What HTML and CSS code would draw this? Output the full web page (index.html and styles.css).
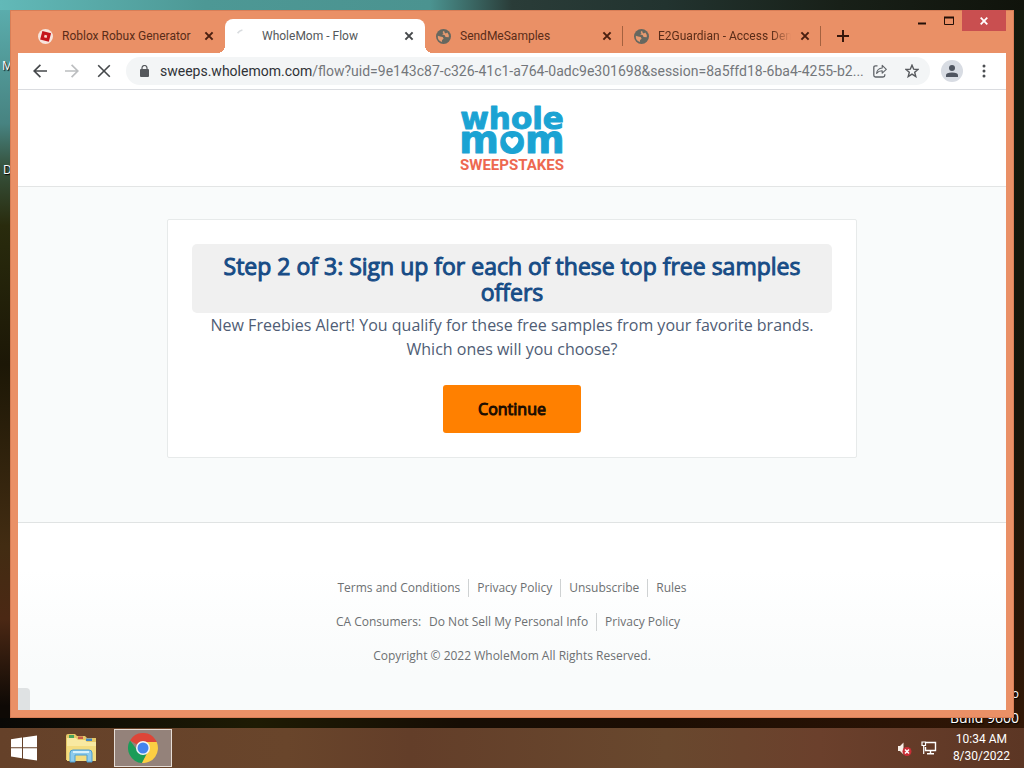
FILE: index.html
```html
<!DOCTYPE html>
<html lang="en">
<head>
<meta charset="utf-8">
<meta name="viewport" content="width=device-width, initial-scale=1">
<title>WholeMom - Flow</title>
<link rel="stylesheet" href="styles.css">
</head>
<body>
<svg class="defs" aria-hidden="true">
  <symbol id="close" viewBox="0 0 10 10"><path d="M1.4 1.4 8.6 8.6M8.6 1.4 1.4 8.6" stroke="currentColor" stroke-width="2" fill="none"/></symbol>
  <symbol id="globe" viewBox="0 0 14 14"><circle cx="7" cy="7" r="7" fill="#66675f"/><path d="M1.7 6.3 3.9 7.1 6.3 7.5 7.1 9.2 5.7 10.3 5.5 12.2A5.6 5.6 0 0 1 1.7 6.3ZM7.5 1.7 6.1 2.9 7 4.2 5.6 5 8.2 5.8 8.9 7.5 11.9 7.7A5.3 5.3 0 0 0 10.6 3.2L9.1 4.2 8.1 3.4Z" fill="#e69a70"/></symbol>
</svg>
<div class="desktop">
  <span class="desk-label label-m">M</span>
  <span class="desk-label label-d">D</span>
  <span class="desk-label label-pro">Windows 8.1 Pro</span>
  <span class="desk-label label-build">Build 9600</span>

  <div class="window">
    <div class="tabstrip">
      <div class="tab">
        <svg class="favicon" viewBox="0 0 14 14"><circle cx="7" cy="7" r="7" fill="#f7e4dc"/><path d="M4.1 1.8 12.2 3.9 10.1 12 2 9.9Z" fill="#c5161c"/><path d="M6.2 5.4 8.6 6 8 8.4 5.6 7.8Z" fill="#f7d9d0"/></svg>
        <span class="tab-title">Roblox Robux Generator</span>
        <button class="tab-close" aria-label="Close tab"><svg viewBox="0 0 10 10"><use href="#close"/></svg></button>
      </div>
      <div class="tab active">
        <svg class="favicon" viewBox="0 0 14 14"><path d="M1.5 4Q3 1.6 6 1" stroke="#d9dcdf" stroke-width="1.5" fill="none"/></svg>
        <span class="tab-title">WholeMom - Flow</span>
        <button class="tab-close" aria-label="Close tab"><svg viewBox="0 0 10 10"><use href="#close"/></svg></button>
      </div>
      <div class="tab divided">
        <svg class="favicon" viewBox="0 0 14 14"><use href="#globe"/></svg>
        <span class="tab-title">SendMeSamples</span>
        <button class="tab-close" aria-label="Close tab"><svg viewBox="0 0 10 10"><use href="#close"/></svg></button>
      </div>
      <div class="tab divided">
        <svg class="favicon" viewBox="0 0 14 14"><use href="#globe"/></svg>
        <span class="tab-title faded">E2Guardian - Access Denied</span>
        <button class="tab-close" aria-label="Close tab"><svg viewBox="0 0 10 10"><use href="#close"/></svg></button>
      </div>
      <button class="new-tab" aria-label="New tab"><svg viewBox="0 0 12 12"><path d="M6 0V12M0 6H12" stroke="#35170c" stroke-width="2"/></svg></button>
      <div class="win-controls">
        <button class="win-btn" aria-label="Minimize"><svg width="10" height="10" viewBox="0 0 10 10"><path d="M1 7.5H9" stroke="#241008" stroke-width="2"/></svg></button>
        <button class="win-btn" aria-label="Maximize"><svg width="10" height="10" viewBox="0 0 10 10"><path d="M.5 1V8.5H9.5V1" stroke="#241008" fill="none"/><path d="M0 1.5H10" stroke="#241008" stroke-width="2"/></svg></button>
        <button class="win-btn win-close" aria-label="Close"><svg width="8" height="8" viewBox="0 0 8 8"><path d="M.7.7 7.3 7.3M7.3.7.7 7.3" stroke="#fff" stroke-width="1.8"/></svg></button>
      </div>
    </div>

    <div class="toolbar">
      <button class="tool" aria-label="Back"><svg width="14" height="14" viewBox="0 0 14 14"><path d="M14 7H1.2M7.4.8 1.2 7 7.4 13.2" stroke="#45484b" stroke-width="1.7" fill="none"/></svg></button>
      <button class="tool" aria-label="Forward"><svg width="14" height="14" viewBox="0 0 14 14"><path d="M0 7H12.8M6.6.8 12.8 7 6.6 13.2" stroke="#bcbec0" stroke-width="1.7" fill="none"/></svg></button>
      <button class="tool" aria-label="Stop"><svg width="14" height="14" viewBox="0 0 14 14"><path d="M1.2 1.2 12.8 12.8M12.8 1.2 1.2 12.8" stroke="#45484b" stroke-width="1.6"/></svg></button>
      <div class="omnibox">
        <svg width="9" height="12" viewBox="0 0 9 12"><path d="M2 5V3a2.5 2.5 0 0 1 5 0v2" stroke="#55585c" stroke-width="1.2" fill="none"/><rect y="4" width="9" height="8" rx="1" fill="#55585c"/></svg>
        <div class="url"><b>sweeps.wholemom.com</b>/flow?uid=9e143c87-c326-41c1-a764-0adc9e301698&amp;session=8a5ffd18-6ba4-4255-b2...</div>
        <button class="tool small" aria-label="Share"><svg width="14" height="14" viewBox="0 0 14 14"><path d="M4.5 1.8H2.5Q.8 1.8.8 3.5V11.3Q.8 13 2.5 13H10Q11.8 13 11.8 11.3V10.2" stroke="#5f6368" stroke-width="1.3" fill="none"/><path d="M3.6 9.4Q4.2 4.3 9.2 4V1.4L13.3 5.4 9.2 9.2V6.7Q5.8 6.6 3.6 9.4Z" stroke="#5f6368" stroke-width="1.1" stroke-linejoin="round" fill="none"/></svg></button>
        <button class="tool small" aria-label="Bookmark"><svg width="14" height="14" viewBox="0 0 14 14"><path d="M7 1.2 8.7 5.2 13 5.5 9.7 8.3 10.8 12.6 7 10.2 3.2 12.6 4.3 8.3 1 5.5 5.3 5.2Z" stroke="#55585c" stroke-width="1.4" fill="none"/></svg></button>
      </div>
      <button class="profile" aria-label="Profile"><svg width="12" height="12" viewBox="0 0 12 12"><circle cx="6" cy="3" r="3" fill="#4f5560"/><path d="M0 12V10.3Q0 7.5 6 7.5T12 10.3V12Z" fill="#4f5560"/></svg></button>
      <button class="tool menu" aria-label="Menu"><svg width="4" height="14" viewBox="0 0 4 14"><g fill="#4c4f53"><circle cx="2" cy="2" r="1.5"/><circle cx="2" cy="7" r="1.5"/><circle cx="2" cy="12" r="1.5"/></g></svg></button>
    </div>

    <div class="page">
      <header class="site-header">
        <svg class="logo" width="108" height="68" viewBox="0 0 108 68" role="img" aria-label="whole mom sweepstakes">
          <text class="logo-word" x="54" y="25" font-size="31">whole</text>
          <text class="logo-word" x="54" y="49" font-size="38">mom</text>
          <ellipse cx="54" cy="38" rx="10" ry="10" fill="#1ba3d3"/>
          <path d="M54 44.5C46 39 46.6 33.5 50 32.8 52 32.5 53.5 33.8 54 35 54.5 33.8 56 32.5 58 32.8 61.4 33.5 62 39 54 44.5Z" fill="#fff"/>
          <text class="logo-sub" x="54" y="66" font-size="15">SWEEPSTAKES</text>
        </svg>
      </header>
      <main class="main">
        <section class="card">
          <h1 class="step">Step 2 of 3: Sign up for each of these top free samples offers</h1>
          <p class="intro">New Freebies Alert! You qualify for these free samples from your favorite brands. Which ones will you choose?</p>
          <button class="continue">Continue</button>
        </section>
      </main>
      <footer class="footer">
        <nav class="links">
          <a href="#terms">Terms and Conditions</a><a href="#privacy">Privacy Policy</a><a href="#unsubscribe">Unsubscribe</a><a href="#rules">Rules</a>
        </nav>
        <nav class="links consumers">
          <span>CA Consumers:</span><a href="#donotsell">Do Not Sell My Personal Info</a><a href="#ca-privacy">Privacy Policy</a>
        </nav>
        <p class="copyright">Copyright © 2022 WholeMom All Rights Reserved.</p>
      </footer>
      <div class="status"></div>
    </div>
  </div>
</div>

<div class="taskbar">
  <button class="task" aria-label="Start"><svg width="26" height="26" viewBox="0 0 26 26"><path d="M0 4.2 11 2.6V12.3H0ZM12 2.4 26 .4V12.3H12ZM0 13.3H11V23.2L0 21.6ZM12 13.3H26V25.5L12 23.4Z" fill="#fff"/></svg></button>
  <button class="task" aria-label="File Explorer"><svg width="32" height="30" viewBox="0 0 32 30"><path d="M1 27V3Q1 1 3 1H10L12 3H20L22 5H31V27Z" fill="#e5c868"/><path d="M4 2H9V5H4Z" fill="#4aa35c"/><path d="M13 3.5H18V6H13Z" fill="#c85b4a"/><path d="M21 5.5H27V8H21Z" fill="#4387c4"/><path d="M2 5H11L13 7H20L22 9H31V28H2Z" fill="#f8e9a1"/><path d="M2 13H31V28H2Z" fill="#f3dc80"/><path d="M5 29V20Q5 17 8 17H24Q27 17 27 20V29H22V22H10V29Z" fill="#8ecbed" stroke="#4d9fd1"/><path d="M8 19H24" stroke="#d8f1fb" stroke-width="2"/></svg></button>
  <button class="task current" aria-label="Google Chrome"><svg width="30" height="30" viewBox="0 0 30 30"><path d="M15 15 2 7.5A15 15 0 0 1 28 7.5L28.7 9H15Z" fill="#dd4638"/><path d="M15 15 20.2 18 14 30A15 15 0 0 1 2 7.5L9.8 18Z" fill="#1b9c58"/><path d="M15 9H28.7A15 15 0 0 1 14 30L20.2 18Z" fill="#fccf43"/><circle cx="15" cy="15" r="7" fill="#f4f5f5"/><circle cx="15" cy="15" r="5.5" fill="#4484ee"/></svg></button>
  <div class="tray">
    <svg width="15" height="15" viewBox="0 0 15 15"><path d="M1 5H3L6.5 1.5V13.5L3 10H1Z" fill="#f8f0e8"/><circle cx="10" cy="10.5" r="4.5" fill="#c92e36"/><path d="M8 8.5 12 12.5M12 8.5 8 12.5" stroke="#fff" stroke-width="1.5"/></svg>
    <svg width="16" height="14" viewBox="0 0 16 14"><path d="M5 1.5H14.5V9.5H4.5V6M9.5 10V12.5M6 12.8H13" stroke="#fff" stroke-width="1.4" fill="none"/><path d="M1 1H4.5V4.5H1ZM2.7 4.5V13" stroke="#fff" stroke-width="1.2" fill="#5b3726"/></svg>
    <div class="clock"><span>10:34 AM</span><span>8/30/2022</span></div>
  </div>
</div>
</body>
</html>
```
FILE: styles.css
```css
* { box-sizing: border-box; }

body {
  margin: 0;
  height: 100vh;
  display: flex;
  flex-direction: column;
  overflow: hidden;
  font-family: "Open Sans", "Noto Sans", sans-serif;
}

button {
  border: 0;
  padding: 0;
  background: none;
  font: inherit;
  color: inherit;
  display: flex;
  align-items: center;
  justify-content: center;
}

svg { display: block; flex: none; }
.defs { position: absolute; width: 0; height: 0; }

/* Desktop */
.desktop {
  position: relative;
  flex: 1;
  min-height: 0;
  padding: 10px;
  display: flex;
  overflow: hidden;
  background:
    linear-gradient(90deg, #62b9b8 0, #4d9895 20%, #4b9390 42%, #2a3c38 50%, #22332f 65%, #182018 82%, #10130b 100%) top / 100% 10px no-repeat,
    linear-gradient(90deg, #090806 0, #1e1b04 25%, #160d04 45%, #1c0d03 65%, #321706 100%) bottom / 100% 10px no-repeat,
    linear-gradient(#141a0d 0, #17160a 55%, #321706 100%) right / 10px 100% no-repeat,
    linear-gradient(#5cb0b0 0, #478381 17%, #36523d 23%, #292b0d 31%, #1c1706 50%, #422c12 75%, #4b2814 85%, #0e0905 97%) left / 10px 100% no-repeat;
}
.desk-label {
  position: absolute;
  font-size: 12px;
  line-height: 16px;
  color: #fff;
  text-shadow: 1px 1px 1px #000;
}
.label-m { left: 2px; top: 58px; }
.label-d { left: 3px; top: 162px; }
.label-pro { right: 5px; bottom: 26px; }
.label-build { right: 5px; bottom: 2px; font-size: 14px; }

/* Browser window */
.window {
  position: relative;
  flex: 1;
  min-width: 0;
  display: flex;
  flex-direction: column;
  padding: 0 8px 8px;
  background: #ea9066;
  box-shadow: inset 0 0 0 1px #d87e57;
}
.tabstrip {
  display: flex;
  align-items: flex-end;
  height: 43px;
  padding-left: 9px;
  font-family: Roboto, "Noto Sans", sans-serif;
  font-size: 12px;
  color: #5a2c18;
}
.tab {
  position: relative;
  flex: 0 1 198px;
  min-width: 0;
  height: 34px;
  display: flex;
  align-items: center;
  gap: 9px;
  padding: 0 11px 0 11px;
}
.tab.active {
  flex-basis: 200px;
  background: #fff;
  border-radius: 8px 8px 0 0;
  color: #54575a;
}
.tab.active .favicon { margin-right: 2px; }
.tab.active::before,
.tab.active::after {
  content: "";
  position: absolute;
  bottom: 0;
  width: 8px;
  height: 8px;
}
.tab.active::before { right: 100%; background: radial-gradient(circle at 0 0, transparent 8px, #fff 8px); }
.tab.active::after { left: 100%; background: radial-gradient(circle at 100% 0, transparent 8px, #fff 8px); }
.tab.divided::after {
  content: "";
  position: absolute;
  right: 0;
  top: 7px;
  width: 1px;
  height: 20px;
  background: #a4613f;
}
.favicon { width: 15px; height: 15px; }
.tab-title {
  flex: 1;
  min-width: 0;
  overflow: hidden;
  white-space: nowrap;
}
.tab-title.faded {
  -webkit-mask-image: linear-gradient(90deg, #000 85%, transparent);
  mask-image: linear-gradient(90deg, #000 85%, transparent);
}
.tab-close { width: 10px; height: 10px; color: #4a1f10; }
.tab-close svg { width: 10px; height: 10px; }
.active .tab-close { color: #45484b; }
.new-tab { width: 44px; height: 34px; }
.new-tab svg { width: 12px; height: 12px; }
.win-controls { display: flex; align-self: flex-start; margin-left: auto; }
.win-btn { width: 27px; height: 21px; }
.win-close { width: 44px; background: #c94f50; }

.toolbar {
  display: flex;
  align-items: center;
  height: 37px;
  padding: 0 8px;
  background: #fff;
  border-bottom: 1px solid #dadce0;
}
.tool { width: 28px; height: 28px; margin-right: 4px; }
.tool.small { margin: 0 2px; }
.tool.menu { margin: 0; }
.omnibox {
  flex: 1;
  min-width: 0;
  height: 28px;
  display: flex;
  align-items: center;
  margin: 0 11px 0 4px;
  padding: 0 2px 0 14px;
  background: #f3f5f6;
  border-radius: 14px;
}
.url {
  flex: 1;
  min-width: 0;
  margin-left: 11px;
  overflow: hidden;
  white-space: nowrap;
  font-family: Roboto, "Noto Sans", sans-serif;
  font-size: 14px;
  color: #73777b;
}
.url b { font-weight: 400; color: #303236; }
.profile {
  width: 22px;
  height: 22px;
  margin-right: 7px;
  border-radius: 50%;
  background: #d8dce3;
}

/* Web page */
.page {
  position: relative;
  flex: 1;
  min-height: 0;
  display: flex;
  flex-direction: column;
  background: #fff;
}
.site-header {
  display: flex;
  justify-content: center;
  padding: 14px 0;
  border-bottom: 1px solid #e3e5e5;
}
.logo { overflow: visible; }
.logo-word {
  font-family: "DejaVu Sans", sans-serif;
  font-weight: 700;
  text-anchor: middle;
  fill: #1ba3d3;
  stroke: #1ba3d3;
  stroke-width: 1px;
  stroke-linejoin: round;
}
.logo-sub {
  font-family: Roboto, "Liberation Sans", sans-serif;
  font-weight: 700;
  text-anchor: middle;
  fill: #ed6850;
}
.main {
  padding: 32px 16px 64px;
  background: #f9fbfb;
  border-bottom: 1px solid #e0e3e3;
}
.card {
  max-width: 690px;
  margin: 0 auto;
  padding: 24px;
  display: flex;
  flex-direction: column;
  align-items: center;
  text-align: center;
  background: #fff;
  border: 1px solid #e7eaea;
  border-radius: 2px;
}
.step {
  align-self: stretch;
  margin: 0;
  padding: 9px 8px 8px;
  border-radius: 5px;
  background: #f0f0f0;
  color: #174c86;
  font-size: 23px;
  line-height: 26px;
  font-weight: 400;
  -webkit-text-stroke: 1px #174c86;
}
.intro {
  margin: 0 0 24px;
  font-size: 16px;
  line-height: 24px;
  color: #4f5d75;
}
.continue {
  height: 48px;
  padding: 0 35px;
  border-radius: 3px;
  background: #ff8000;
  color: #1c0d00;
  font-size: 16px;
  -webkit-text-stroke: 1px #1c0d00;
}
.footer {
  flex: 1;
  display: flex;
  flex-direction: column;
  align-items: center;
  gap: 16px;
  padding-top: 56px;
  font-size: 12px;
  line-height: 18px;
  color: #6d7072;
  background: linear-gradient(#fff 25%, #f9fbfb 80%);
}
.links { display: flex; }
.links > * { padding: 0 8px; color: inherit; text-decoration: none; }
.links a + a { border-left: 1px solid #cfd2d3; }
.links span { padding-right: 0; }
.consumers { padding-right: 8px; }
.copyright { margin: 0; }
.status {
  position: absolute;
  left: 0;
  bottom: 0;
  width: 12px;
  height: 22px;
  background: #dfe2e3;
  border-radius: 0 4px 0 0;
}

/* Taskbar */
.taskbar {
  height: 40px;
  display: flex;
  align-items: center;
  background: linear-gradient(90deg, #654129 0, #69452b 28%, #633e29 40%, #69482e 65%, #6b402c 80%, #5c3624 100%);
}
.task { width: 48px; height: 38px; margin-right: 9px; }
.task.current {
  width: 58px;
  background: #94827a;
  border: 1px solid #e6ddd6;
}
.tray {
  margin-left: auto;
  display: flex;
  align-items: center;
  gap: 9px;
  padding-right: 14px;
}
.clock {
  margin-left: 7px;
  display: flex;
  flex-direction: column;
  align-items: center;
  font-family: Roboto, "Noto Sans", sans-serif;
  font-size: 12px;
  line-height: 17px;
  color: #fff;
}
```
